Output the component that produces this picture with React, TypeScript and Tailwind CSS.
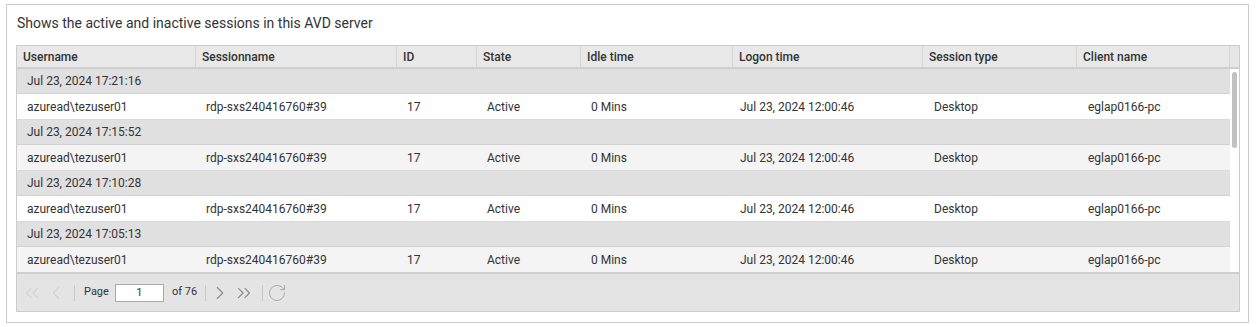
import React from "react";
import { ChevronsLeft, ChevronLeft, ChevronRight, ChevronsRight, RotateCw } from "lucide-react";

const cols = [
  { name: "Username", w: "w-[179px]", p: "pl-[10px]" },
  { name: "Sessionname", w: "w-[201px]", p: "pl-[10px]" },
  { name: "ID", w: "w-[80px]", p: "pl-[10px]" },
  { name: "State", w: "w-[104px]", p: "pl-[10px]" },
  { name: "Idle time", w: "w-[152px]", p: "pl-[10px]" },
  { name: "Logon time", w: "w-[190px]", p: "pl-[7px]" },
  { name: "Session type", w: "w-[154px]", p: "pl-[11px]" },
  { name: "Client name", w: "w-[153px]", p: "pl-[11px]" },
];

const groups = [
  "Jul 23, 2024 17:21:16",
  "Jul 23, 2024 17:15:52",
  "Jul 23, 2024 17:10:28",
  "Jul 23, 2024 17:05:13",
];

const rowValues = [
  "azuread\\tezuser01",
  "rdp-sxs240416760#39",
  "17",
  "Active",
  "0 Mins",
  "Jul 23, 2024 12:00:46",
  "Desktop",
  "eglap0166-pc",
];

export default function App() {
  return (
    <div className="w-[1256px] h-[327px] bg-white text-[#333333]" style={{ fontFamily: "Roboto, 'Liberation Sans', sans-serif" }}>
      <div className="ml-[6px] mt-[4px] w-[1243px] h-[319px] border border-[#cccccc] pl-[9px] pr-[8px] pt-[8px] pb-[10px] flex flex-col">
        <div className="h-[20px] leading-[20px] text-[14px] pl-[1px]">Shows the active and inactive sessions in this AVD server</div>
        <div className="mt-[12px] w-[1224px] border border-[#cccccc] flex flex-col">
          {/* header */}
          <div className="flex h-[23px] bg-[#e8e8e8] border-b-2 border-[#cfcfcf]">
            {cols.map((c) => (
              <div key={c.name} className={`${c.w} shrink-0 h-full border-r border-[#d6d6d6] pl-[6px] pt-[1px] text-[12px] font-medium leading-[21px]`}>
                {c.name}
              </div>
            ))}
            <div className="flex-1 bg-[#e6e6e6]"></div>
          </div>
          {/* body */}
          <div className="relative h-[203px] overflow-hidden bg-white">
            <div className="w-[1213px]">
              {groups.map((g, gi) => (
                <div key={g}>
                  <div className="h-[25px] bg-[#e0e0e0] border-b border-[#d2d2d2] pl-[10px] text-[12px] leading-[24px]">{g}</div>
                  <div className={`flex h-[26px] border-b border-[#dadada] ${gi % 2 === 1 ? "bg-[#f4f4f4]" : "bg-white"}`}>
                    {rowValues.map((v, i) => (
                      <div key={i} className={`${cols[i].w} ${cols[i].p} shrink-0 pt-[1px] text-[12px] leading-[24px]`}>{v}</div>
                    ))}
                  </div>
                </div>
              ))}
            </div>
            <div className="absolute left-[1215px] top-[3px] w-[5px] h-[76px] rounded-full bg-[#c1c1c1]"></div>
          </div>
          {/* toolbar */}
          <div className="h-[39px] border-t-2 border-[#cfcfcf] bg-[#e4e4e4] flex items-center pl-[4px] text-[11px]">
            <ChevronsLeft size={22} strokeWidth={1.2} className="text-[#d2d2d2]" />
            <ChevronLeft size={22} strokeWidth={1.2} className="text-[#d2d2d2] ml-[2px]" />
            <div className="w-px h-[16px] bg-[#c8c8c8] ml-[7px]"></div>
            <span className="ml-[9px] text-[#333]">Page</span>
            <div className="ml-[6px] w-[49px] h-[18px] bg-white border border-[#a9a9a9] text-center leading-[16px] text-[11px]">1</div>
            <span className="ml-[8px] text-[#333]">of 76</span>
            <div className="w-px h-[16px] bg-[#c8c8c8] ml-[8px]"></div>
            <ChevronRight size={22} strokeWidth={1.2} className="text-[#888] ml-[3px]" />
            <ChevronsRight size={22} strokeWidth={1.2} className="text-[#888] ml-[2px]" />
            <div className="w-px h-[16px] bg-[#c8c8c8] ml-[7px]"></div>
            <RotateCw size={20} strokeWidth={1.2} className="text-[#aaa] ml-[4px]" />
          </div>
        </div>
      </div>
    </div>
  );
}
